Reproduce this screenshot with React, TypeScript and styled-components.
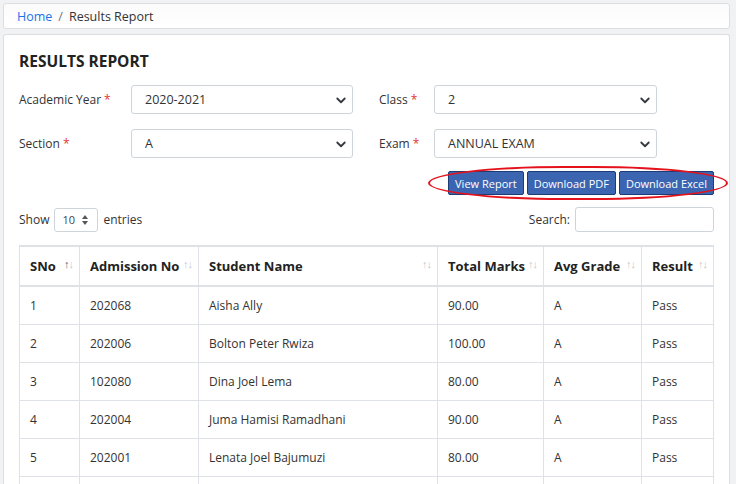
import React from 'react'
import styled, { createGlobalStyle } from 'styled-components'

/* ----------------------
   Data
---------------------- */

type Row = { sno: number; admission: string; name: string; total: string; grade: string; result: string }

const rows: Row[] = [
  { sno: 1, admission: '202068', name: 'Aisha Ally', total: '90.00', grade: 'A', result: 'Pass' },
  { sno: 2, admission: '202006', name: 'Bolton Peter Rwiza', total: '100.00', grade: 'A', result: 'Pass' },
  { sno: 3, admission: '102080', name: 'Dina Joel Lema', total: '80.00', grade: 'A', result: 'Pass' },
  { sno: 4, admission: '202004', name: 'Juma Hamisi Ramadhani', total: '90.00', grade: 'A', result: 'Pass' },
  { sno: 5, admission: '202001', name: 'Lenata Joel Bajumuzi', total: '80.00', grade: 'A', result: 'Pass' },
  { sno: 6, admission: '202010', name: 'Neema John Mushi', total: '70.00', grade: 'B', result: 'Pass' },
]

const columns = [
  { label: 'SNo', width: 60, active: true },
  { label: 'Admission No', width: 119, active: false },
  { label: 'Student Name', width: 239, active: false },
  { label: 'Total Marks', width: 106, active: false },
  { label: 'Avg Grade', width: 98, active: false },
  { label: 'Result', width: 72, active: false },
]

/* ----------------------
   Styled Components
---------------------- */

const GlobalStyle = createGlobalStyle`
  html, body {
    margin: 0;
    padding: 0;
    background: #f1f2f4;
    font-family: 'Open Sans', 'Noto Sans', sans-serif;
    font-size: 12px;
    color: #212529;
    overflow: hidden;
  }
  * { box-sizing: border-box; }
`

const Page = styled.div`
  display: flex;
  flex-direction: column;
  gap: 5px;
  padding: 3px 6px 0 3px;
  height: 484px;
  overflow: hidden;
`

const Breadcrumb = styled.nav`
  flex-shrink: 0;
  height: 26px;
  display: flex;
  align-items: center;
  gap: 6px;
  padding: 0 13px;
  background: linear-gradient(#fbfbfb, #ffffff);
  border: 1px solid #dedede;
  border-radius: 3px;
  color: #333;
  font-size: 12.5px;
`

const Crumb = styled.a`
  color: #1a73e8;
  text-decoration: none;
`

const Slash = styled.span`
  color: #6c757d;
`

const Card = styled.section`
  flex: 1 0 auto;
  background: #fff;
  border: 1px solid #dedede;
  border-bottom: none;
  border-radius: 3px 3px 0 0;
  padding: 15px 15px 0 15px;
`

const Title = styled.h1`
  margin: 0 0 13px;
  font-size: 15.5px;
  font-weight: 700;
  color: #222;
`

const FormGrid = styled.div`
  display: grid;
  grid-template-columns: 334px 278px;
  column-gap: 26px;
  row-gap: 15px;
`

const Field = styled.div<{ $labelWidth: number }>`
  display: grid;
  grid-template-columns: ${({ $labelWidth }) => $labelWidth}px 1fr;
  align-items: center;
`

const Label = styled.label`
  color: #333;
`

const Required = styled.span`
  color: #e3342f;
  margin-left: 3px;
`

const Select = styled.div`
  height: 29px;
  display: flex;
  align-items: center;
  justify-content: space-between;
  padding: 0 5px 0 13px;
  border: 1px solid #ced4da;
  border-radius: 3px;
  color: #333;
  font-size: 12.5px;
`

const Actions = styled.div`
  display: flex;
  justify-content: flex-end;
  margin-top: 13px;
`

const ButtonGroup = styled.div`
  position: relative;
  display: flex;
  gap: 3px;
`

const Highlight = styled.div`
  position: absolute;
  left: -20px;
  right: -14px;
  top: -5px;
  bottom: -5px;
  border: 2px solid #e5121c;
  border-radius: 45% / 50%;
  pointer-events: none;
`

const Button = styled.button`
  height: 24px;
  padding: 0 6px;
  background: #3b65b0;
  color: #fff;
  border: 1px solid #1c3c78;
  border-radius: 2px;
  font-family: inherit;
  font-size: 11px;
  cursor: pointer;
`

const Controls = styled.div`
  display: flex;
  justify-content: space-between;
  align-items: center;
  margin-top: 12px;
`

const Inline = styled.div`
  display: flex;
  align-items: center;
  gap: 5px;
  color: #333;
`

const LengthSelect = styled.div`
  width: 44px;
  height: 24px;
  display: flex;
  align-items: center;
  justify-content: space-between;
  padding: 0 9px 0 7px;
  border: 1px solid #ced4da;
  border-radius: 3px;
  font-size: 11px;
  color: #444;
`

const SearchInput = styled.input`
  width: 139px;
  height: 25px;
  border: 1px solid #ced4da;
  border-radius: 3px;
  outline: none;
`

const Table = styled.table`
  margin-top: 13px;
  width: 694px;
  border-collapse: collapse;
  table-layout: fixed;
  border: 1px solid #dee2e6;
  border-top: 2px solid #dee2e6;
`

const Th = styled.th`
  height: 40px;
  padding: 0 6px 0 10px;
  border: 1px solid #dee2e6;
  border-bottom: 2px solid #dee2e6;
  text-align: left;
  font-weight: 700;
  font-size: 13px;
  color: #222;
`

const HeadInner = styled.div`
  display: flex;
  align-items: center;
  justify-content: space-between;
`

const SortIcon = styled.span`
  display: flex;
  font-size: 11px;
  letter-spacing: -1px;
  margin-top: -6px;
`

const Arrow = styled.span<{ $active?: boolean }>`
  color: ${({ $active }) => ($active ? '#555e6e' : '#c4c8cc')};
`

const Td = styled.td`
  height: 38px;
  padding: 0 10px;
  border: 1px solid #dee2e6;
  color: #333;
  white-space: nowrap;
`

/* ----------------------
   Icons
---------------------- */

const Chevron = () => (
  <svg width='12' height='12' viewBox='0 0 16 16'>
    <path d='M3 6l5 5 5-5' fill='none' stroke='#343a40' strokeWidth='2.4' strokeLinecap='round' strokeLinejoin='round' />
  </svg>
)

const UpDown = () => (
  <svg width='6' height='10' viewBox='0 0 6 10'>
    <path d='M3 0L6 4H0z M3 10L0 6h6z' fill='#555' />
  </svg>
)

/* ----------------------
   Component
---------------------- */

const FormSelect = ({ value }: { value: string }) => (
  <Select>
    <span>{value}</span>
    <Chevron />
  </Select>
)

export default function App() {
  return (
    <>
      <GlobalStyle />
      <Page>
        <Breadcrumb>
          <Crumb href='#'>Home</Crumb>
          <Slash>/</Slash>
          <span>Results Report</span>
        </Breadcrumb>

        <Card>
          <Title>RESULTS REPORT</Title>

          <FormGrid>
            <Field $labelWidth={112}>
              <Label>
                Academic Year<Required>*</Required>
              </Label>
              <FormSelect value='2020-2021' />
            </Field>
            <Field $labelWidth={55}>
              <Label>
                Class<Required>*</Required>
              </Label>
              <FormSelect value='2' />
            </Field>
            <Field $labelWidth={112}>
              <Label>
                Section<Required>*</Required>
              </Label>
              <FormSelect value='A' />
            </Field>
            <Field $labelWidth={55}>
              <Label>
                Exam<Required>*</Required>
              </Label>
              <FormSelect value='ANNUAL EXAM' />
            </Field>
          </FormGrid>

          <Actions>
            <ButtonGroup>
              <Button>View Report</Button>
              <Button>Download PDF</Button>
              <Button>Download Excel</Button>
              <Highlight />
            </ButtonGroup>
          </Actions>

          <Controls>
            <Inline>
              Show
              <LengthSelect>
                <span>10</span>
                <UpDown />
              </LengthSelect>
              entries
            </Inline>
            <Inline>
              Search:
              <SearchInput />
            </Inline>
          </Controls>

          <Table>
            <colgroup>
              {columns.map((c) => (
                <col key={c.label} style={{ width: c.width }} />
              ))}
            </colgroup>
            <thead>
              <tr>
                {columns.map((c) => (
                  <Th key={c.label}>
                    <HeadInner>
                      <span>{c.label}</span>
                      <SortIcon>
                        <Arrow $active={c.active}>↑</Arrow>
                        <Arrow>↓</Arrow>
                      </SortIcon>
                    </HeadInner>
                  </Th>
                ))}
              </tr>
            </thead>
            <tbody>
              {rows.map((r) => (
                <tr key={r.sno}>
                  <Td>{r.sno}</Td>
                  <Td>{r.admission}</Td>
                  <Td>{r.name}</Td>
                  <Td>{r.total}</Td>
                  <Td>{r.grade}</Td>
                  <Td>{r.result}</Td>
                </tr>
              ))}
            </tbody>
          </Table>
        </Card>
      </Page>
    </>
  )
}
